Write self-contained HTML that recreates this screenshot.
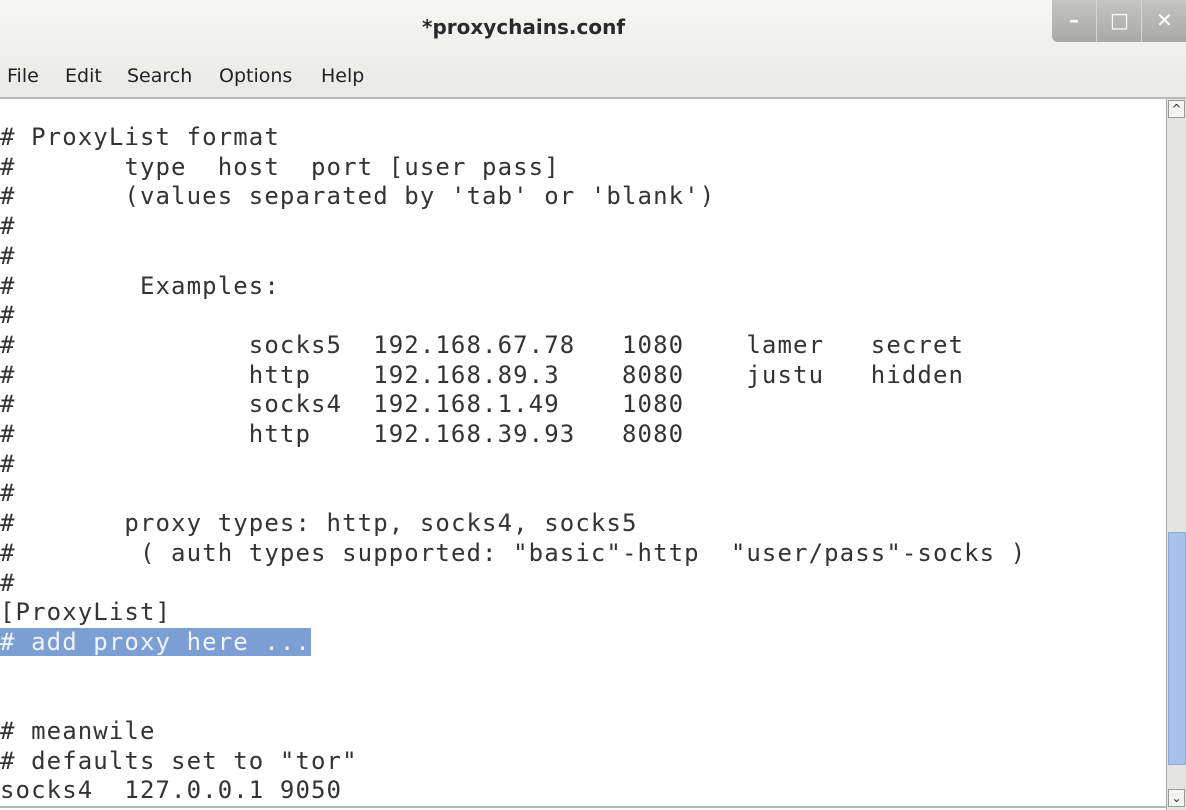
<!DOCTYPE html>
<html><head><meta charset="utf-8"><style>
body{margin:0;width:1186px;height:810px;overflow:hidden;background:#fff;position:relative;font-family:"DejaVu Sans","Liberation Sans",sans-serif}
.top{position:absolute;left:0;top:0;width:1186px;height:97px;background:linear-gradient(#f6f6f5,#e9e9e7);border-bottom:2px solid #b9b9b6}
.title{position:absolute;left:422px;top:15px;font-weight:bold;font-size:20px;color:#2a2a2a}
.btns{position:absolute;left:1052px;top:0;width:134px;height:42px;background:linear-gradient(#c4c4c2,#a9a9a7);border-bottom-left-radius:6px}
.btns div{position:absolute;top:0;height:42px;border-left:1px solid #d6d6d4;color:#fff;font-weight:bold;text-align:center;line-height:40px;font-size:20px}
.m{position:absolute;top:65px;font-size:19px;color:#222}
.ed{position:absolute;left:0;top:123px;font-family:"DejaVu Sans Mono","Liberation Mono",monospace;font-size:24px;letter-spacing:1.1px;line-height:29.7px;color:#333;white-space:pre;tab-size:8}
.sel{background:#7b9fd2;color:#f0f4fa}
.sb{position:absolute;left:1166px;top:99px;width:20px;height:711px;background:#e4e4e2;border-left:1px solid #a8a8a6}
.thumb{position:absolute;left:1168px;top:532px;width:18px;height:233px;background:#a6c1ea;border:1px solid #8aa7d6;box-sizing:border-box}
.arr{position:absolute;left:1168px;width:17px;height:18px;background:#f4f4f3;border:1px solid #999;box-sizing:border-box;font-size:12px;text-align:center;line-height:16px;color:#333}
.bl{position:absolute;left:0;top:806px;width:1166px;height:2px;background:#b5b5b3}
</style></head><body>
<div class="top"><div class="title">*proxychains.conf</div>
<div class="btns"><div style="left:0;width:44px;border-left:none">–</div><div style="left:44px;width:45px">□</div><div style="left:89px;width:45px">✕</div></div>
<span class="m" style="left:7px">File</span><span class="m" style="left:65px">Edit</span><span class="m" style="left:127px">Search</span><span class="m" style="left:219px">Options</span><span class="m" style="left:321px">Help</span></div>
<div class="ed"># ProxyList format
#	type  host  port [user pass]
#	(values separated by 'tab' or 'blank')
#
#
#	 Examples:
#
#		socks5	192.168.67.78	1080	lamer	secret
#		http	192.168.89.3	8080	justu	hidden
#		socks4	192.168.1.49	1080
#		http	192.168.39.93	8080
#
#
#	proxy types: http, socks4, socks5
#	 ( auth types supported: "basic"-http  "user/pass"-socks )
#
[ProxyList]
<span class="sel"># add proxy here ...</span>


# meanwile
# defaults set to "tor"
socks4 	127.0.0.1 9050</div>
<div class="bl"></div>
<div class="sb"></div>
<div class="thumb"></div>
<div class="arr" style="top:100px">^</div>
<div class="arr" style="top:789px">⌄</div>
</body></html>
